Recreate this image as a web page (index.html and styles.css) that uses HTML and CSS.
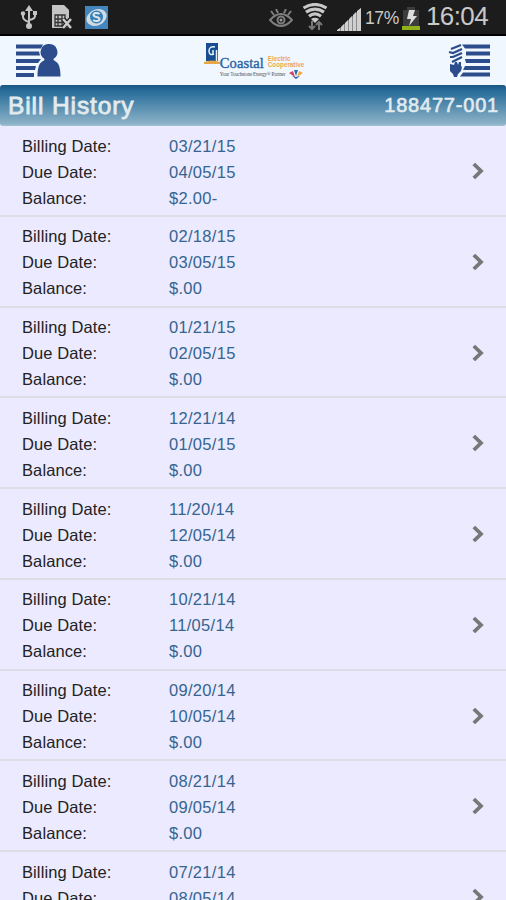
FILE: index.html
```html
<!DOCTYPE html>
<html lang="en">

<head>
    <meta charset="UTF-8">
    <meta name="viewport" content="width=device-width, initial-scale=1.0">
    <title>Bill History</title>
    <link rel="stylesheet" href="styles.css">
</head>

<body>
    <!-- Status bar -->
    <div class="status">
        <div class="status-left">
            <svg width="18" height="26" viewBox="0 0 18 26" fill="none" stroke="#c4c4c4" stroke-width="2">
                <path d="M9 5v17M3 10v3q0 3 6 5M15 10v2q0 3-6 4" />
                <path d="M9 1l4 6H5z" fill="#c4c4c4" stroke="none" />
                <circle cx="9" cy="22" r="3" fill="#c4c4c4" stroke="none" />
                <circle cx="3" cy="9.500" r="2.200" fill="#c4c4c4" stroke="none" />
                <path d="M13 7h4v4h-4z" fill="#c4c4c4" stroke="none" />
            </svg>
            <svg width="22" height="26" viewBox="0 0 22 26">
                <path d="M1 1h12l5 5v18H1z" fill="#c4c4c4" />
                <path d="M4 11h10v11H4zM7 11v11M11 11v11M4 15h10M4 18.500h10" fill="none" stroke="#333" stroke-width="1.300" />
                <path d="M12 15l8 9M20 15l-8 9" stroke="#222" stroke-width="5" />
                <path d="M12 15l8 9M20 15l-8 9" stroke="#ccc" stroke-width="2.500" />
            </svg>
            <svg width="23" height="23" viewBox="0 0 23 23">
                <path d="M0 0h23v23H0z" fill="#4286bd" />
                <ellipse cx="11.500" cy="11.500" rx="10.500" ry="8" fill="#cfdae1" transform="rotate(-25 11.500 11.500)" />
                <circle cx="11.500" cy="11" r="6.500" fill="#3580b9" />
                <path d="M14.500 8c-2-1.800-6-1.300-6 1 0 2.600 6 1.400 6 4 0 2.400-4.300 2.600-6.300.9" fill="none" stroke="#dde5ea" stroke-width="2" />
            </svg>
        </div>
        <div class="status-right">
            <svg class="eye" width="24" height="19" viewBox="0 0 24 19" fill="none" stroke="#7e7e7e" stroke-width="2">
                <path d="M1 11q11-12 22 0-11 12-22 0zM5 6L2 2M9 4L7 0M15 4l2-4M19 6l3-4" />
                <circle cx="12" cy="11" r="3.500" />
                <circle cx="12" cy="11" r="1.500" fill="#999" stroke="none" />
            </svg>
            <svg class="wifi" width="26" height="28" viewBox="0 0 26 28" fill="none" stroke="#c8c8c8" stroke-width="3.200">
                <path d="M1.500 5q11.500-7 23 0M4 9.200q9-6 18 0M7 13.200q6-4.500 12 0" />
                <path d="M9 16q4-2.500 8 0l-4 4z" fill="#c8c8c8" stroke="none" />
                <path d="M10 18v8M7 23l3 3 3-3M17 27v-8M14 22l3-3 3 3" stroke="#777" stroke-width="2" />
            </svg>
            <svg class="signal" width="24" height="24" viewBox="0 0 24 24" fill="#d0d0d0">
                <path d="M0 24L24 1v23z" fill="#8a8a8a" />
                <path d="M0 24v-1l3-2v3zM4 24v-4l3-3v7zM8 24v-8l3-3v11zM12 24V12l3-3v15zM16 24V8l3-3v19zM20 24V4l4-3v23z" />
            </svg>
            <span class="percent">17%</span>
            <svg class="battery" width="18" height="23" viewBox="0 0 18 23">
                <path d="M5 0h8v3h4v16H1V3h4z" fill="#3c3c3c" />
                <path d="M7 3h6l-2 6h4L7 19l2-7H5z" fill="#ddd" />
                <path d="M0 19h18v4H0z" fill="#8fb21b" />
            </svg>
            <span class="clock">16:04</span>
        </div>
    </div>

    <!-- App bar -->
    <div class="appbar">
        <svg width="45" height="34" viewBox="0 0 45 34" fill="#2c4c8b">
            <path d="M0 .5h27l-2 4H0zM0 7.500h23l1 4H0zM0 15h25l-3 4H0zM0 22h20l-1 4H0zM0 29h18v4H0z" />
            <path d="M33 0a8 8 0 0 1 5 14.500q-1.500 1.500 1 2.500c4 2 5.500 7 5.500 15.500h-23C21.500 24 23 19 27 17q2.500-1 1-2.500A8 8 0 0 1 33 0z" />
        </svg>
        <div class="logo">
            <svg width="16" height="24" viewBox="0 0 16 24">
                <path d="M2 0h12v18H2z" fill="#174e91" />
                <path d="M0 19q8-3 16 0v2H0z" fill="#e6a746" />
                <path d="M11 4Q5 3 5 8t5 3M9 7v4M12.500 7v11" fill="none" stroke="#e9f2fb" stroke-width="1.500" />
            </svg>
            <div class="logo-text">
                <div class="logo-name">
                    <span class="coastal">Coastal</span>
                    <span class="coop">Electric<br>Cooperative</span>
                </div>
                <div class="tagline">
                    <span>Your Touchstone Energy® Partner</span>
                    <svg width="14" height="9" viewBox="0 0 14 9">
                        <path d="M0 3l4-2 2 6z" fill="#d6425e" />
                        <path d="M5 0h4L7 6z" fill="#2c6cb0" />
                        <path d="M10 1l4 2-6 4z" fill="#eda641" />
                        <path d="M3 6l4 1 4-1-4 3z" fill="#3a5ba0" />
                    </svg>
                </div>
            </div>
        </div>
        <svg width="43" height="33" viewBox="0 0 43 33" fill="#2c4c8b">
            <path d="M14 .5h28v4H17zM18 7.500h24v4H18zM17 15h25v4H18zM17 22h25v4H15zM15 28.500h27v4H12z" />
            <path d="M3 5l10-4M1 8l4 1 9-4M2 13l3 0 9-4M4 18l10-5" fill="none" stroke="#2c4c8b" stroke-width="2.200" />
            <path d="M2 20l4 1 1-3h2l1 3 1-3h2v4l1 1-1 4-3 3-1 3H6l-1-3-3-3z" />
        </svg>
    </div>

    <!-- Title -->
    <div class="titlebar">
        <h1>Bill History</h1>
        <span class="account">188477-001</span>
    </div>

    <div class="bills" id="bills"></div>

    <script>
        const bills = [
            ['03/21/15', '04/05/15', '$2.00-'],
            ['02/18/15', '03/05/15', '$.00'],
            ['01/21/15', '02/05/15', '$.00'],
            ['12/21/14', '01/05/15', '$.00'],
            ['11/20/14', '12/05/14', '$.00'],
            ['10/21/14', '11/05/14', '$.00'],
            ['09/20/14', '10/05/14', '$.00'],
            ['08/21/14', '09/05/14', '$.00'],
            ['07/21/14', '08/05/14', '$.00']
        ];

        document.getElementById('bills').innerHTML = bills.map(bill => `
            <div class="bill">
                <div class="bill-info">
                    <span>Billing Date:</span><span class="value">${bill[0]}</span>
                    <span>Due Date:</span><span class="value">${bill[1]}</span>
                    <span>Balance:</span><span class="value">${bill[2]}</span>
                </div>
                <svg width="12" height="18" viewBox="0 0 12 18" fill="none" stroke="#777" stroke-width="3.800">
                    <path d="M1.800 2L9 9l-7.200 7" />
                </svg>
            </div>`).join('');
    </script>
</body>

</html>
```

FILE: styles.css
```css
* {
    box-sizing: border-box;
}

body {
    margin: 0;
    height: 900px;
    overflow: hidden;
    display: flex;
    flex-direction: column;
    font-family: "Liberation Sans", Arial, Helvetica, sans-serif;
    background-color: #ebeafe;
}

svg {
    display: block;
    flex-shrink: 0;
}

.status {
    height: 36px;
    flex-shrink: 0;
    display: flex;
    justify-content: space-between;
    background-color: #1c1c1c;
    border-bottom: 2px solid #000;
    color: #c9c9c9;
}

.status-left {
    display: flex;
    gap: 14px;
    padding: 4px 0 0 20px;
}

.status-left svg:nth-child(2) {
    margin-left: -1px;
}

.status-left svg:last-child {
    margin: 2px 0 0 -2px;
}

.status-right {
    display: flex;
    padding-right: 17px;
}

.eye {
    margin: 9px 9px 0 0;
}

.wifi {
    margin: 3px 9px 0 0;
}

.signal {
    margin: 7px 4px 0 0;
}

.percent {
    width: 34px;
    margin-right: 3px;
    font-size: 17.5px;
    line-height: 36px;
    letter-spacing: -0.4px;
}

.battery {
    margin: 7px 7px 0 0;
}

.clock {
    width: 62px;
    font-size: 26px;
    line-height: 32px;
    letter-spacing: -0.6px;
    margin-left: -1px;
    margin-right: 1px;
}

.appbar {
    height: 49px;
    flex-shrink: 0;
    display: flex;
    justify-content: space-between;
    padding: 8px 15px 0 16px;
    background-color: #f0f7ff;
}

.logo {
    display: flex;
    margin: -1px 0 0 -1px;
}

.logo-text {
    padding-top: 12px;
}

.logo-name {
    display: flex;
    gap: 2px;
    height: 15px;
}

.coastal {
    width: 46px;
    font: 14.5px/16px "Liberation Serif", "Times New Roman", serif;
    -webkit-text-stroke: 0.4px #2a66a5;
    letter-spacing: 0.1px;
    color: #2a66a5;
}

.coop {
    font-size: 6.3px;
    font-weight: bold;
    line-height: 6px;
    padding-top: 1px;
    color: #eda84d;
}

.tagline {
    display: flex;
    justify-content: space-between;
    width: 83px;
    font: 5.2px/8px "Liberation Serif", "Times New Roman", serif;
    letter-spacing: -0.2px;
    white-space: nowrap;
    color: #555;
}

.titlebar {
    height: 41px;
    flex-shrink: 0;
    display: flex;
    justify-content: space-between;
    align-items: center;
    padding: 0 8px;
    border-radius: 3px;
    background: linear-gradient(#185784, #286d9b 15%, #8cb2c7 95%, #a5c2d5);
    color: #e2ebee;
}

h1 {
    margin: 0;
    font-size: 24.5px;
    font-weight: normal;
    letter-spacing: 0.9px;
    -webkit-text-stroke: 0.8px #e2ebee;
}

.account {
    font-size: 20px;
    letter-spacing: 0.8px;
    margin-right: -1px;
    -webkit-text-stroke: 0.6px #e2ebee;
}

.bill {
    height: 90.75px;
    display: flex;
    justify-content: space-between;
    padding: 7px 22px 0;
    border-bottom: 2px solid #dddde5;
}

.bill-info {
    display: grid;
    grid-template-columns: 147px 1fr;
    grid-auto-rows: 26px;
    align-items: center;
    font-size: 16.5px;
    letter-spacing: 0.1px;
    color: #222;
}

.value {
    letter-spacing: 0.3px;
    color: #356490;
}

.bill svg {
    margin-top: 29px;
}
```
